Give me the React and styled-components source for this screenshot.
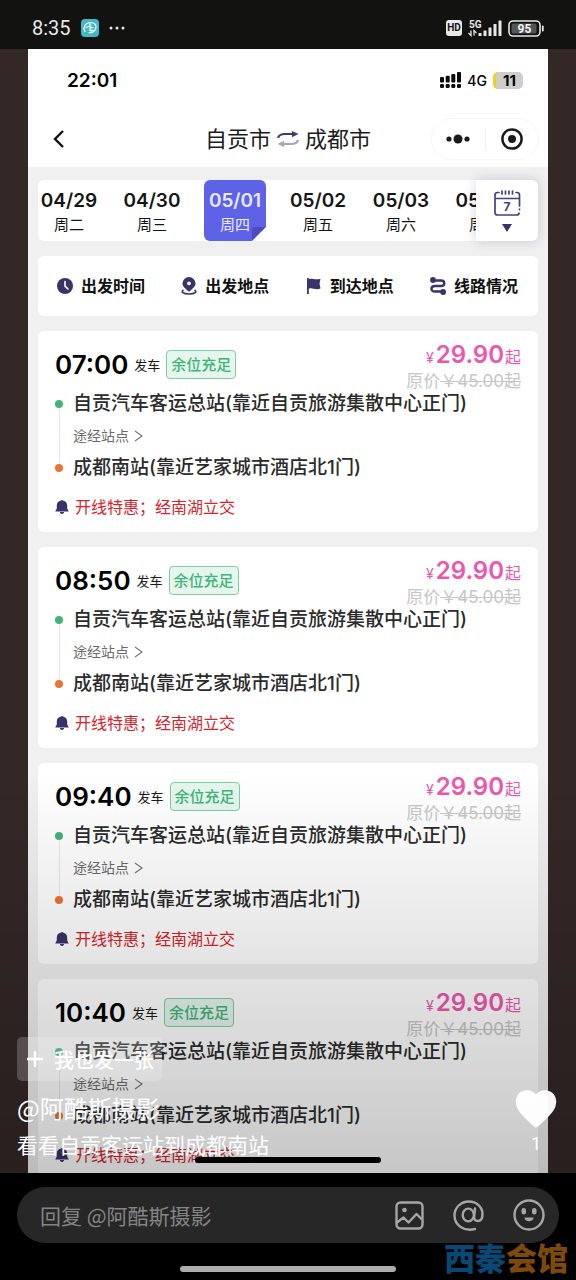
import React from 'react';
import styled, { createGlobalStyle } from 'styled-components';

const GlobalStyles = createGlobalStyle`
  :root {
    --black: #000;
    --bar: #121210;
    --stage: #342827;
    --screen: #f0f0f1;
    --navy: #38346a;
    --violet: #5d62e6;
    --green: #3fb479;
    --orange: #ee7238;
    --pink: #ec57ae;
    --red: #d7232b;
    --soft: #a6a6a6;
  }
  * {
    box-sizing: border-box;
  }
  body {
    margin: 0;
    background: var(--black);
    font-family: Inter, 'Noto Sans CJK SC', sans-serif;
  }
  button {
    padding: 0;
    border: 0;
    background: none;
    color: inherit;
    font: inherit;
    cursor: pointer;
  }
  svg {
    display: block;
    flex: none;
  }
`;

const PageStyles = styled.div`
  display: flex;
  flex-direction: column;
  height: 100vh;
  position: relative;
`;

const StatusBar = styled.header`
  flex: none;
  display: flex;
  align-items: center;
  gap: 10px;
  height: 49px;
  padding: 7px 31px 0 32px;
  background: var(--bar);
  color: #e8e8e8;
  .clock {
    font: 20px/24px Roboto, sans-serif;
  }
  .right {
    display: flex;
    align-items: center;
    gap: 6px;
    margin-left: auto;
  }
`;

const HdBadge = styled.span`
  width: 16px;
  border-radius: 3px;
  background: #e8e8e8;
  color: var(--bar);
  font: 700 10px/16px Roboto, sans-serif;
  text-align: center;
`;

const StageStyles = styled.main`
  flex: 1;
  min-height: 0;
  position: relative;
  overflow: hidden;
  padding: 0 28px;
  background: var(--stage);
`;

const PhoneScreen = styled.section`
  position: relative;
  height: 100%;
  overflow: hidden;
  background: var(--screen);
`;

const PhoneTop = styled.div`
  display: flex;
  align-items: center;
  height: 62px;
  padding: 0 25px 0 39px;
  background: #fff;
  .time {
    flex: 1;
    font-size: 19px;
    font-weight: 600;
  }
  .net {
    margin: 0 6px;
    font-size: 14px;
    font-weight: 500;
  }
`;

const PhoneBattery = styled.span`
  width: 30px;
  border-left: 3px solid #f2cf1d;
  border-radius: 5px;
  background: #cdcdcd;
  font-size: 15px;
  font-weight: 700;
  line-height: 17px;
  text-align: center;
`;

const NavBar = styled.nav`
  display: grid;
  grid-template-columns: 1fr auto 1fr;
  align-items: center;
  height: 56px;
  padding: 0 9px;
  background: #fff;
  .back {
    justify-self: start;
    padding: 6px 14px;
  }
`;

const RouteTitle = styled.h1`
  display: flex;
  align-items: center;
  gap: 6px;
  margin: 0;
  color: #1c1c1c;
  font-size: 22px;
  font-weight: 400;
  line-height: 32px;
`;

const Capsule = styled.div`
  justify-self: end;
  display: flex;
  align-items: center;
  width: 108px;
  height: 42px;
  border: 1px solid #f7f7f7;
  border-radius: 21px;
  button {
    flex: 1;
    display: grid;
    place-items: center;
  }
  button + button {
    border-left: 1px solid #f0f0f0;
  }
`;

const Content = styled.div`
  display: flex;
  flex-direction: column;
  gap: 15px;
  padding: 13px 10px 0;
`;

const DateBar = styled.div`
  display: flex;
  height: 61px;
  border-radius: 6px;
  background: #fff;
`;

const DateList = styled.div`
  flex: 1;
  min-width: 0;
  display: flex;
  gap: 21px;
  overflow: hidden;
`;

const DateButton = styled.button`
  flex: none;
  display: flex;
  flex-direction: column;
  align-items: center;
  width: 62px;
  padding-top: 9px;
  border-radius: 6px;
  color: ${({ $active }) => ($active ? '#e9eaff' : '#151515')};
  background: ${({ $active }) => ($active ? 'var(--violet)' : 'none')};
  position: relative;
  .day {
    font-size: 19px;
    font-weight: 600;
    line-height: 24px;
  }
  .week {
    font-size: 15px;
    line-height: 24px;
  }
  .fold {
    position: absolute;
    right: 0;
    bottom: 0;
  }
`;

const CalendarButton = styled.button`
  display: flex;
  flex-direction: column;
  align-items: center;
  justify-content: center;
  gap: 8px;
  width: 62px;
  border-radius: 0 6px 6px 0;
  background: #fff;
  box-shadow: 0 0 12px rgba(40, 40, 80, 0.2);
`;

const FilterBar = styled.div`
  display: flex;
  align-items: center;
  justify-content: space-between;
  height: 60px;
  padding: 0 20px 0 19px;
  border-radius: 6px;
  background: #fff;
  button {
    display: flex;
    align-items: center;
    gap: 8px;
    color: #111;
    font-size: 16px;
    font-weight: 700;
    line-height: 24px;
  }
`;

const TripCard = styled.article`
  padding: 12px 17px 13px;
  border-radius: 6px;
  background: #fff;
`;

const TripHead = styled.div`
  display: flex;
  justify-content: space-between;
  height: 49px;
`;

const Departure = styled.div`
  display: flex;
  align-items: center;
  gap: 6px;
  height: 29px;
  margin-top: 7px;
  color: #1a1a1a;
  font-size: 13px;
  .time {
    color: #000;
    font-size: 26px;
    font-weight: 600;
  }
`;

const SeatBadge = styled.span`
  padding: 0 4px;
  border: 1px solid #7fcda5;
  border-radius: 4px;
  background: #e5f6ed;
  color: var(--green);
  font-size: 15px;
  font-weight: 500;
  line-height: 27px;
`;

const Price = styled.div`
  text-align: right;
  line-height: 24px;
  .now {
    color: var(--pink);
    font-size: 16px;
  }
  .now span {
    font-size: 14px;
  }
  .now strong {
    margin: 0 1px 0 2px;
    font-size: 24px;
    font-weight: 600;
  }
  .was {
    color: #c6c6c6;
    font-size: 17px;
    line-height: 22px;
  }
`;

const RouteStyles = styled.div`
  display: flex;
  gap: 10px;
`;

const Rail = styled.div`
  display: flex;
  flex-direction: column;
  align-items: center;
  padding: 8px 0;
  .line {
    flex: 1;
    width: 1px;
    background: #e6e6e6;
  }
`;

const Dot = styled.span`
  width: 8px;
  height: 8px;
  border-radius: 50%;
  background: ${({ $color }) => $color};
`;

const Stops = styled.div`
  display: flex;
  flex-direction: column;
  align-items: flex-start;
  gap: 8px;
  color: #2b2b2b;
  font-size: 19px;
  font-weight: 500;
  line-height: 24px;
  white-space: nowrap;
  button {
    display: flex;
    align-items: center;
    gap: 5px;
    color: #6a6a6a;
    font-size: 14px;
    font-weight: 400;
    line-height: 24px;
  }
`;

const Notice = styled.p`
  display: flex;
  align-items: center;
  gap: 6px;
  margin: 15px 0 0;
  color: var(--red);
  font-size: 16px;
  line-height: 24px;
`;

const HomeIndicator = styled.div`
  position: absolute;
  bottom: ${({ $bottom }) => $bottom};
  left: 50%;
  width: ${({ $width }) => $width};
  height: 6px;
  border-radius: 3px;
  background: ${({ $color }) => $color};
  transform: translateX(-50%);
`;

const Shade = styled.div`
  position: absolute;
  inset: auto 0 0;
  height: 400px;
  background: linear-gradient(transparent, rgba(0, 0, 0, 0.22));
  pointer-events: none;
`;

const Caption = styled.div`
  position: absolute;
  bottom: 14px;
  left: 17px;
  display: flex;
  flex-direction: column;
  align-items: flex-start;
  color: #fff;
  font-family: 'Noto Sans CJK SC', sans-serif;
  .author {
    margin-top: 12px;
    font-size: 24px;
    line-height: 30px;
  }
  .text {
    margin: 6px 0 0;
    font-size: 21px;
    line-height: 30px;
  }
`;

const PostButton = styled.button`
  display: flex;
  align-items: center;
  gap: 10px;
  height: 44px;
  padding: 0 8px 0 9px;
  border-radius: 5px;
  background: rgba(255, 255, 255, 0.2);
  font-size: 20px;
  font-weight: 500;
`;

const LikeButton = styled.button`
  position: absolute;
  right: 19px;
  bottom: 17px;
  display: flex;
  flex-direction: column;
  align-items: center;
  gap: 4px;
  color: #fff;
  font: 18px/24px Roboto, sans-serif;
`;

const Footer = styled.footer`
  flex: none;
  position: relative;
  height: 107px;
  padding: 14px 17px 0;
`;

const ReplyForm = styled.form`
  display: flex;
  align-items: center;
  gap: 29px;
  height: 56px;
  padding: 0 14px 0 23px;
  border-radius: 28px;
  background: #272727;
  color: var(--soft);
  input {
    flex: 1;
    min-width: 0;
    padding: 0;
    border: 0;
    outline: 0;
    background: none;
    color: #ddd;
    font: 21px/30px 'Noto Sans CJK SC', sans-serif;
  }
  input::placeholder {
    color: #848484;
    opacity: 1;
  }
`;

const Watermark = styled.div`
  position: absolute;
  right: 8px;
  bottom: 7px;
  color: #7d4a0b;
  font: 900 31px/32px 'Noto Sans CJK SC', sans-serif;
  .blue {
    color: #084872;
  }
`;

const dates = [
  { day: '04/29', week: '周二' },
  { day: '04/30', week: '周三' },
  { day: '05/01', week: '周四', active: true },
  { day: '05/02', week: '周五' },
  { day: '05/03', week: '周六' },
  { day: '05/04', week: '周日' },
];

const times = ['07:00', '08:50', '09:40', '10:40'];

function AppIcon() {
  return (
    <svg width="18" height="18" viewBox="0 0 18 18" fill="none" stroke="#e5f8fa" strokeLinecap="round">
      <rect width="18" height="18" rx="4" fill="#42b7ca" stroke="none" />
      <path d="M4 12.500C1.500 9 4 4.500 8.500 3.700C13 3 16 6 14.800 9.500C13.800 12.500 10.500 14 8 13.700" strokeWidth="1.300" />
      <path d="M5 8.500L10 6.500M9 5V11.500H12M9 8.700H12" strokeWidth="1.300" />
    </svg>
  );
}

function MobileSignal() {
  return (
    <svg width="34" height="18" viewBox="0 0 34 18" fill="#e8e8e8">
      <text x="1" y="8.500" fontFamily="Roboto" fontSize="10" fontWeight="700">5G</text>
      <path d="M3 11.500V16.500L.5 14M6 16.500V11.500L8.500 14" fill="none" stroke="#e8e8e8" strokeWidth="1.300" />
      <rect x="10.500" y="14" width="3" height="3" rx=".5" />
      <rect x="15.500" y="11.500" width="3" height="5.500" rx=".5" />
      <rect x="20.500" y="8.500" width="3" height="8.500" rx=".5" />
      <rect x="25.500" y="5" width="3" height="12" rx=".5" />
      <rect x="30.500" y="1.500" width="3" height="15.500" rx=".5" />
    </svg>
  );
}

function BatteryLevel() {
  return (
    <svg width="37" height="17" viewBox="0 0 37 17" fill="none">
      <rect x="1" y="1" width="31" height="15" rx="4" stroke="#e8e8e8" strokeWidth="1.600" />
      <rect x="3.500" y="3.500" width="25" height="10" rx="1.500" fill="#555" />
      <path d="M34.800 6.500v4" stroke="#e8e8e8" strokeWidth="1.800" strokeLinecap="round" />
      <text x="16.500" y="12.800" textAnchor="middle" fill="#f2f2f2" fontFamily="Roboto" fontSize="12" fontWeight="700">95</text>
    </svg>
  );
}

function DualSignal() {
  return (
    <svg width="21" height="16" viewBox="0 0 21 16" fill="#0b0b0b">
      <rect y="5" width="4" height="5.500" rx="1" />
      <rect x="5.700" y="3.800" width="4" height="6.700" rx="1" />
      <rect x="11.300" y="2" width="4" height="8.500" rx="1" />
      <rect x="17" width="4" height="10.500" rx="1" />
      <rect y="12" width="4" height="4" rx="1.300" />
      <rect x="5.700" y="12" width="4" height="4" rx="1.300" />
      <rect x="11.300" y="12" width="4" height="4" rx="1.300" />
      <rect x="17" y="12" width="4" height="4" rx="1.300" />
    </svg>
  );
}

function SwapIcon() {
  return (
    <svg width="22" height="16" viewBox="0 0 22 16" fill="none" strokeWidth="2.200">
      <path d="M1 7C2 3.500 5 3 8 3H16" stroke="#3f3a70" />
      <path d="M15 0L21.500 3L15 6.200Z" fill="#3f3a70" />
      <path d="M21 9C20 12.500 17 13 14 13H6" stroke="#a5a3bd" />
      <path d="M7 9.800L.5 13L7 16Z" fill="#a5a3bd" />
    </svg>
  );
}

function CalendarIcon() {
  return (
    <svg width="27" height="26" viewBox="0 0 27 26" fill="none" stroke="#46427a" strokeWidth="1.700" strokeLinecap="round">
      <path d="M5 2.500H3.500Q1 2.500 1 5V22.500Q1 25 3.500 25H22.500Q25 25 25 23M22 2.500H23Q25.500 2.500 25.500 5V16M25.500 19V19.600M1 8.500H25.500" />
      <path d="M8 1V4M11.500 1V4M15 1V4M18.500 1V4" />
      <text x="13" y="20.500" textAnchor="middle" fill="#46427a" stroke="none" fontFamily="Inter" fontSize="12" fontWeight="700">7</text>
    </svg>
  );
}

function ClockIcon() {
  return (
    <svg width="16" height="16" viewBox="0 0 16 16">
      <circle cx="8" cy="8" r="8" fill="#38346a" />
      <path d="M8 3.500V8.200L11 11" fill="none" stroke="#fff" strokeWidth="1.600" strokeLinecap="round" />
    </svg>
  );
}

function PinIcon() {
  return (
    <svg width="16" height="18" viewBox="0 0 16 18" fill="#38346a">
      <path fillRule="evenodd" d="M8 0A6.500 6.500 0 0 1 14.500 6.500C14.500 10 10.500 12.500 8 14.800C5.500 12.500 1.500 10 1.500 6.500A6.500 6.500 0 0 1 8 0ZM8 4.500A1.900 1.900 0 1 0 8 8.300A1.900 1.900 0 0 0 8 4.500Z" />
      <path d="M2.500 13C-.5 14.800 2 17 8 17S16.500 14.800 13.500 13" fill="none" stroke="#38346a" strokeWidth="1.700" />
    </svg>
  );
}

function FlagIcon() {
  return (
    <svg width="16" height="16" viewBox="0 0 16 16" fill="#38346a">
      <path d="M1 0H2.800V1.200C6-.5 8 2.500 14.500.8L13.500 5.500L14.500 10.500C9 12.500 6 9 2.800 10.800V16H1Z" />
    </svg>
  );
}

function LineIcon() {
  return (
    <svg width="16" height="18" viewBox="0 0 16 18" fill="#38346a">
      <circle cx="3" cy="3" r="2.900" />
      <circle cx="13.100" cy="15" r="2.900" />
      <path d="M3 3.500H11Q14.300 3.500 14.300 6.200T11 9H5Q1.500 9 1.500 11.800T5 14.500H12" fill="none" stroke="#38346a" strokeWidth="2.400" />
    </svg>
  );
}

function BellIcon() {
  return (
    <svg width="14" height="14" viewBox="0 0 14 14" fill="#38346a">
      <path d="M6 .6Q7-.4 8 .6C10.800 1.200 12.200 3 12.200 5.500V8.500L13.800 11.500H.2L1.800 8.500V5.500C1.800 3 3.200 1.200 6 .6ZM4.800 12H9.200Q8.700 14 7 14T4.800 12Z" />
    </svg>
  );
}

function Trip({ time }) {
  return (
    <TripCard>
      <TripHead>
        <Departure>
          <span className="time">{time}</span>
          发车
          <SeatBadge>余位充足</SeatBadge>
        </Departure>
        <Price>
          <div className="now">
            <span>¥</span>
            <strong>29.90</strong>起
          </div>
          <div className="was">
            原价<s>￥45.00起</s>
          </div>
        </Price>
      </TripHead>
      <RouteStyles>
        <Rail>
          <Dot $color="var(--green)" />
          <span className="line" />
          <Dot $color="var(--orange)" />
        </Rail>
        <Stops>
          <span>自贡汽车客运总站(靠近自贡旅游集散中心正门)</span>
          <button type="button">
            途经站点
            <svg width="9" height="12" viewBox="0 0 9 12" fill="none" stroke="#777" strokeWidth="1.200">
              <path d="M1 1L8 6L1 11" />
            </svg>
          </button>
          <span>成都南站(靠近艺家城市酒店北1门)</span>
        </Stops>
      </RouteStyles>
      <Notice>
        <BellIcon />
        开线特惠；经南湖立交
      </Notice>
    </TripCard>
  );
}

function BusApp() {
  return (
    <PhoneScreen>
      <PhoneTop>
        <span className="time">22:01</span>
        <DualSignal />
        <span className="net">4G</span>
        <PhoneBattery>11</PhoneBattery>
      </PhoneTop>
      <NavBar>
        <button className="back" type="button" aria-label="返回">
          <svg width="14" height="20" viewBox="0 0 14 20" fill="none" stroke="#111" strokeWidth="2.400">
            <path d="M12 2L4 10L12 18" />
          </svg>
        </button>
        <RouteTitle>
          自贡市
          <SwapIcon />
          成都市
        </RouteTitle>
        <Capsule>
          <button type="button" aria-label="更多">
            <svg width="24" height="10" viewBox="0 0 24 10" fill="#1a1a1a">
              <circle cx="3" cy="5" r="2.600" />
              <circle cx="12" cy="5" r="4.500" />
              <circle cx="21" cy="5" r="2.600" />
            </svg>
          </button>
          <button type="button" aria-label="关闭">
            <svg width="22" height="22" viewBox="0 0 22 22" fill="none">
              <circle cx="11" cy="11" r="9.600" stroke="#1a1a1a" strokeWidth="2.500" />
              <circle cx="11" cy="11" r="4" fill="#1a1a1a" />
            </svg>
          </button>
        </Capsule>
      </NavBar>
      <Content>
        <DateBar>
          <DateList>
            {dates.map(({ day, week, active }) => (
              <DateButton key={day} type="button" $active={active}>
                <span className="day">{day}</span>
                <span className="week">{week}</span>
                {active && (
                  <svg className="fold" width="14" height="14" viewBox="0 0 14 14">
                    <path d="M14 0L0 14V3Q0 0 3 0Z" fill="#4a4cc0" />
                    <path d="M14 0V14H0Z" fill="#fff" />
                  </svg>
                )}
              </DateButton>
            ))}
          </DateList>
          <CalendarButton type="button" aria-label="选择日期">
            <CalendarIcon />
            <svg width="10" height="8" viewBox="0 0 10 8" fill="#38346a">
              <path d="M0 0H10L5 8Z" />
            </svg>
          </CalendarButton>
        </DateBar>
        <FilterBar>
          <button type="button"><ClockIcon />出发时间</button>
          <button type="button"><PinIcon />出发地点</button>
          <button type="button"><FlagIcon />到达地点</button>
          <button type="button"><LineIcon />线路情况</button>
        </FilterBar>
        {times.map((time) => (
          <Trip key={time} time={time} />
        ))}
      </Content>
      <HomeIndicator $bottom="10px" $width="186px" $color="var(--black)" />
    </PhoneScreen>
  );
}

export default function App() {
  return (
    <PageStyles>
      <GlobalStyles />
      <StatusBar>
        <span className="clock">8:35</span>
        <AppIcon />
        <svg width="16" height="4" viewBox="0 0 16 4" fill="#e8e8e8">
          <circle cx="2" cy="2" r="1.500" />
          <circle cx="8" cy="2" r="1.500" />
          <circle cx="14" cy="2" r="1.500" />
        </svg>
        <div className="right">
          <HdBadge>HD</HdBadge>
          <MobileSignal />
          <BatteryLevel />
        </div>
      </StatusBar>
      <StageStyles>
        <BusApp />
        <Shade />
        <Caption>
          <PostButton type="button">
            <svg width="18" height="18" viewBox="0 0 18 18" stroke="#fff" strokeWidth="2.400">
              <path d="M9 1V17M1 9H17" />
            </svg>
            我也发一张
          </PostButton>
          <span className="author">@阿酷斯摄影</span>
          <p className="text">看看自贡客运站到成都南站</p>
        </Caption>
        <LikeButton type="button">
          <svg width="42" height="38" viewBox="0 0 42 38" fill="#fff" fillOpacity=".96">
            <path d="M21 4.500C17 -1 8 -1.200 3.500 4C-1 9.500 .5 17 5 22.500C9.500 28 14.500 32.500 19 36.500Q21 38.500 23 36.500C27.500 32.500 32.500 28 37 22.500C41.500 17 43 9.500 38.500 4C34 -1.200 25 -1 21 4.500Z" />
          </svg>
          1
        </LikeButton>
      </StageStyles>
      <Footer>
        <ReplyForm>
          <input type="text" aria-label="回复" placeholder="回复 @阿酷斯摄影" />
          <button type="button" aria-label="图片">
            <svg width="29" height="29" viewBox="0 0 29 29" fill="none" stroke="currentColor" strokeWidth="2.400" strokeLinejoin="round">
              <rect x="1.500" y="1.500" width="26" height="26" rx="4" />
              <path d="M2 21.500L8.500 16.500L13.500 21.500L21.500 13L27 18.500" />
              <circle cx="9.500" cy="9" r="2.300" fill="currentColor" stroke="none" />
            </svg>
          </button>
          <button type="button" aria-label="提及">
            <svg width="31" height="31" viewBox="0 0 31 31" fill="none" stroke="currentColor" strokeWidth="2.400" strokeLinecap="round">
              <path d="M22 29C11 32 1.500 25 1.500 15.500C1.500 7.500 8 1.500 15.800 1.500C23.500 1.500 29.500 7 29.500 14C29.500 18.500 27.500 21 24.800 21C22 21 21 19 21.200 16.500L22 8.500" />
              <ellipse cx="15.300" cy="15" rx="5.600" ry="6.400" />
            </svg>
          </button>
          <button type="button" aria-label="表情">
            <svg width="32" height="32" viewBox="0 0 32 32" fill="none" stroke="currentColor" strokeWidth="2.400">
              <circle cx="16" cy="16" r="14.500" />
              <rect x="8.500" y="9" width="4.500" height="6.500" rx="2.200" fill="currentColor" stroke="none" />
              <rect x="19" y="9" width="4.500" height="6.500" rx="2.200" fill="currentColor" stroke="none" />
              <path d="M11.500 18.500H20.500C20.500 23.500 11.500 23.500 11.500 18.500Z" fill="currentColor" stroke="none" />
            </svg>
          </button>
        </ReplyForm>
        <HomeIndicator $bottom="8px" $width="216px" $color="#adadad" />
        <Watermark>
          <span className="blue">西秦</span>会馆
        </Watermark>
      </Footer>
    </PageStyles>
  );
}
